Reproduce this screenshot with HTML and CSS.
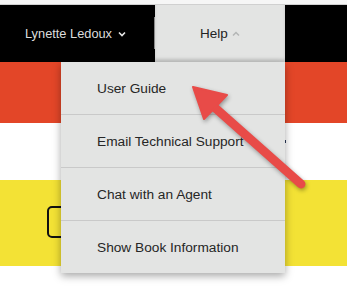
FILE: index.html
```html
<!DOCTYPE html>
<html lang="en">

<head>
    <meta charset="UTF-8">
    <title>Help Menu</title>
    <link rel="stylesheet" href="styles.css">
</head>

<body>
    <div class="page">
        <div class="top-strip"></div>
        <div class="header">
            <div class="user-menu">
                <span>Lynette Ledoux</span>
                <svg class="chevron" viewBox="0 0 8 6" width="8" height="6">
                    <path d="M1 1.5 L4 4.5 L7 1.5" fill="none" stroke="#e6e6e6" stroke-width="1.6"/>
                </svg>
            </div>
            <div class="help-tab">
                <span>Help</span>
                <svg class="chevron" viewBox="0 0 8 6" width="8" height="6">
                    <path d="M1 4.5 L4 1.5 L7 4.5" fill="none" stroke="#b4b6b6" stroke-width="1.5"/>
                </svg>
            </div>
            <div class="header-rest"></div>
        </div>
        <div class="band band-orange"></div>
        <div class="band band-white"></div>
        <div class="band band-yellow">
            <div class="outline-btn"></div>
        </div>

        <span class="hidden-caret"></span>

        <ul class="help-dropdown">
            <li>User Guide</li>
            <li>Email Technical Support</li>
            <li>Chat with an Agent</li>
            <li>Show Book Information</li>
        </ul>

        <svg class="arrow" viewBox="0 0 347 295" width="347" height="295">
            <line x1="213" y1="106" x2="301" y2="184" stroke="#e84b48" stroke-width="9" stroke-linecap="round"/>
            <polygon points="193,87 227,95 204,119" fill="#e84b48" stroke="#e84b48" stroke-width="2" stroke-linejoin="round"/>
        </svg>
    </div>
</body>

</html>
```

FILE: styles.css
```css
body,
html {
    margin: 0;
    padding: 0;
    font-family: 'Liberation Sans', Arial, sans-serif;
    background-color: white;
}

.page {
    position: relative;
    width: 347px;
    height: 295px;
    overflow: hidden;
}

.top-strip {
    height: 4px;
    background-color: #f6f6f6;
    border-bottom: 1px solid #d0d0d0;
}

.header {
    display: flex;
    height: 57px;
    background-color: black;
}

.user-menu {
    width: 155px;
    display: flex;
    align-items: center;
    justify-content: center;
    gap: 6px;
    padding-right: 4px;
    box-sizing: border-box;
    color: #dcdcdc;
    font-size: 12.8px;
}

.help-tab {
    position: relative;
    width: 130px;
    display: flex;
    align-items: center;
    justify-content: center;
    gap: 4px;
    background-color: #e3e4e3;
    box-shadow: inset 0 -3px 3px rgba(0, 0, 0, 0.12);
    color: #222;
    font-size: 13.5px;
}

.help-tab::before {
    content: "";
    position: absolute;
    left: -1px;
    top: 12px;
    width: 1px;
    height: 32px;
    background-color: #8a8a8a;
}

.header-rest {
    flex-grow: 1;
}

.band-orange {
    height: 61px;
    background-color: #e34628;
}

.band-white {
    height: 57px;
    background-color: white;
}

.band-yellow {
    height: 86px;
    background-color: #f3e235;
    padding: 26px 0 0 47px;
    box-sizing: border-box;
}

.outline-btn {
    width: 60px;
    height: 32px;
    border: 2px solid #111;
    border-radius: 5px;
    box-sizing: border-box;
}

.hidden-caret {
    position: absolute;
    left: 284px;
    top: 140px;
    width: 2px;
    height: 3px;
    background-color: #2a3a5a;
}

.help-dropdown {
    position: absolute;
    left: 61px;
    top: 62px;
    width: 224px;
    margin: 0;
    padding: 0;
    list-style: none;
    background-color: #e3e4e3;
    box-shadow: 0 3px 8px rgba(0, 0, 0, 0.35);
}

.help-dropdown li {
    height: 52px;
    display: flex;
    align-items: center;
    padding-left: 36px;
    color: #262626;
    font-size: 13.7px;
    border-top: 1px solid #c9c9c9;
}

.help-dropdown li:first-child {
    border-top: none;
}

.arrow {
    position: absolute;
    left: 0;
    top: 0;
    pointer-events: none;
    filter: drop-shadow(1px 2px 2px rgba(0, 0, 0, 0.35));
}
```
